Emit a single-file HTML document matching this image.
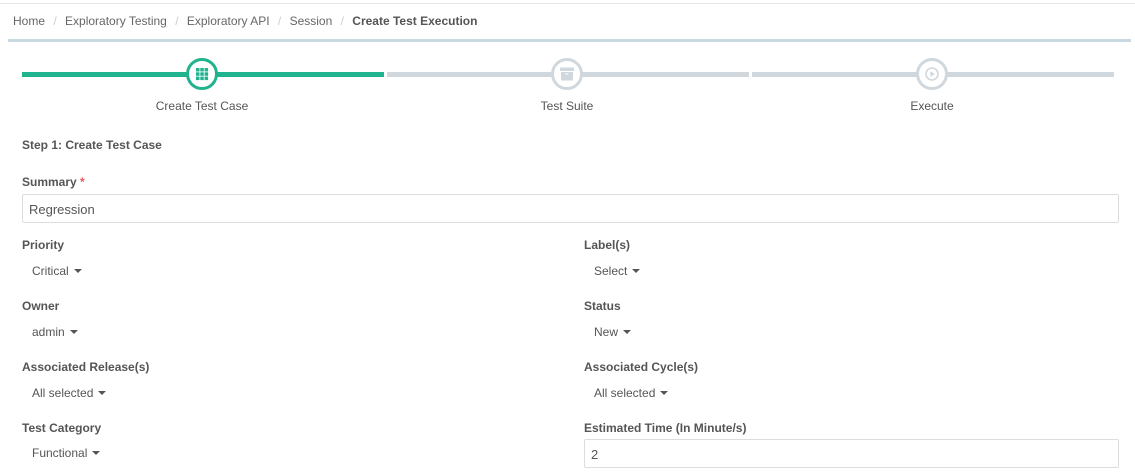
<!DOCTYPE html><html><head><style>
body{margin:0;width:1135px;height:473px;background:#fff;font-family:"Liberation Sans",sans-serif;color:#555;position:relative;overflow:hidden}
.a{position:absolute;white-space:nowrap}
.lbl{font-size:12px;font-weight:bold;color:#555}
.dd{font-size:12px;color:#555}
.dd:after{content:"";display:inline-block;margin-left:5px;border-left:4px solid transparent;border-right:4px solid transparent;border-top:4px solid #555;vertical-align:2px}
.inp{position:absolute;border:1px solid #ddd;border-radius:2px;box-sizing:border-box;font-size:13px;color:#555;padding:7px 6px}
.bar{position:absolute;top:72px;height:5px}
.c{position:absolute;top:58px;width:32px;height:32px;border-radius:50%;box-sizing:border-box;background:#fff;border:3px solid #d0d8dd}
.st{position:absolute;top:99px;font-size:12px;color:#555;transform:translateX(-50%)}
</style></head><body>
<div class="a" style="left:0;top:3px;width:1135px;height:1px;background:#e6e6e6"></div>
<div class="a" style="left:13px;top:14px;font-size:12px;color:#666">Home <span style="color:#ccc;margin:0 5px">/</span> Exploratory Testing <span style="color:#ccc;margin:0 5px">/</span> Exploratory API <span style="color:#ccc;margin:0 5px">/</span> Session <span style="color:#ccc;margin:0 5px">/</span> <b style="color:#555">Create Test Execution</b></div>
<div class="a" style="left:8px;top:39px;width:1123px;height:3px;background:#c9d9e2"></div>
<div class="bar" style="left:22px;width:362px;background:#1fb38e"></div>
<div class="bar" style="left:387px;width:362px;background:#d0d8dd"></div>
<div class="bar" style="left:752px;width:362px;background:#d0d8dd"></div>
<div class="c" style="left:186px;border-color:#1fb38e"><svg width="26" height="26" viewBox="0 0 26 26"><g fill="#1fb38e"><rect x="7" y="7" width="3.5" height="3.5"/><rect x="11.3" y="7" width="3.5" height="3.5"/><rect x="15.6" y="7" width="3.5" height="3.5"/><rect x="7" y="11.3" width="3.5" height="3.5"/><rect x="11.3" y="11.3" width="3.5" height="3.5"/><rect x="15.6" y="11.3" width="3.5" height="3.5"/><rect x="7" y="15.6" width="3.5" height="3.5"/><rect x="11.3" y="15.6" width="3.5" height="3.5"/><rect x="15.6" y="15.6" width="3.5" height="3.5"/></g></svg></div>
<div class="c" style="left:551px"><svg width="26" height="26" viewBox="0 0 26 26"><rect x="6" y="6.5" width="14" height="3.5" fill="#d0d8dd"/><rect x="7" y="11" width="12" height="8.5" fill="#d0d8dd"/><rect x="11.5" y="12.5" width="3" height="1" fill="#fff"/></svg></div>
<div class="c" style="left:916px"><svg width="26" height="26" viewBox="0 0 26 26"><circle cx="13" cy="13" r="6" fill="none" stroke="#d0d8dd" stroke-width="1.6"/><path d="M11.3 10.2L16 13L11.3 15.8Z" fill="#d0d8dd"/></svg></div>
<div class="st" style="left:202px">Create Test Case</div>
<div class="st" style="left:567px">Test Suite</div>
<div class="st" style="left:932px">Execute</div>
<div class="a" style="left:22px;top:138px;font-size:12px;font-weight:bold;color:#555">Step 1: Create Test Case</div>
<div class="a lbl" style="left:22px;top:175px">Summary <span style="color:#e55">*</span></div>
<div class="inp" style="left:22px;top:194px;width:1097px;height:29px">Regression</div>
<div class="a lbl" style="left:22px;top:238px">Priority</div><div class="a dd" style="left:32px;top:264px">Critical</div>
<div class="a lbl" style="left:584px;top:238px">Label(s)</div><div class="a dd" style="left:594px;top:264px">Select</div>
<div class="a lbl" style="left:22px;top:299px">Owner</div><div class="a dd" style="left:32px;top:325px">admin</div>
<div class="a lbl" style="left:584px;top:299px">Status</div><div class="a dd" style="left:594px;top:325px">New</div>
<div class="a lbl" style="left:22px;top:360px">Associated Release(s)</div><div class="a dd" style="left:32px;top:386px">All selected</div>
<div class="a lbl" style="left:584px;top:360px">Associated Cycle(s)</div><div class="a dd" style="left:594px;top:386px">All selected</div>
<div class="a lbl" style="left:22px;top:421px">Test Category</div><div class="a dd" style="left:32px;top:446px">Functional</div>
<div class="a lbl" style="left:584px;top:421px">Estimated Time (In Minute/s)</div>
<div class="inp" style="left:584px;top:439px;width:535px;height:29px">2</div>
</body></html>
